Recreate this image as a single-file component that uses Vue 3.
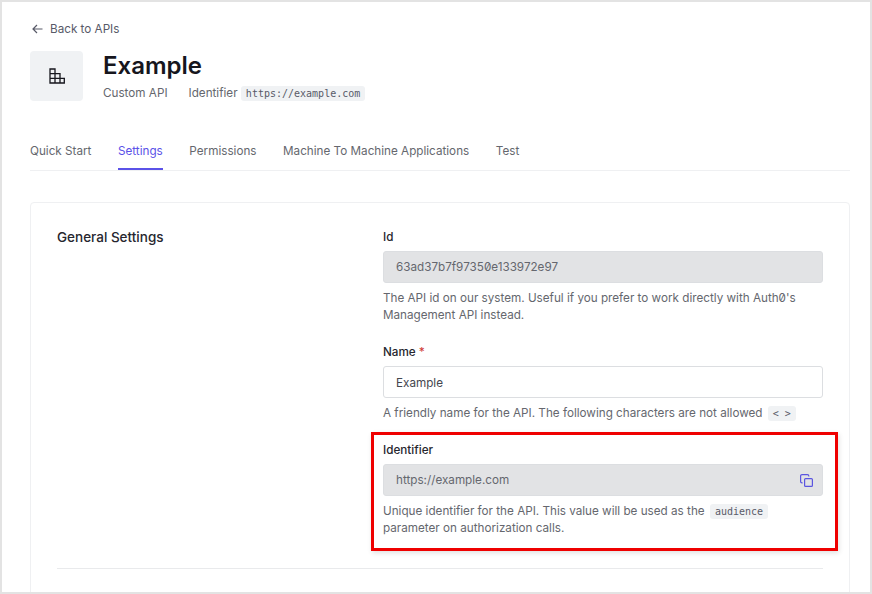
<template>
  <div class="page">
    <a class="back">
      <svg width="11" height="10" viewBox="0 0 11 10" fill="none" stroke="#585a68" stroke-width="1.2">
        <path d="M10.5 5H1M5 1L1 5l4 4" />
      </svg>
      <span>Back to APIs</span>
    </a>

    <header class="head">
      <div class="logo">
        <svg width="16" height="16" viewBox="0 0 16 16" fill="none" stroke="#16161d" stroke-width="1.3">
          <path d="M1 1h5v14H1zM1 5.6h10M1 10.3h15M6 5.6h5V15M6 10.3h9.3V15H6M11 10.3V15" />
        </svg>
      </div>
      <div>
        <h1>Example</h1>
        <div class="sub">
          <span>Custom API</span>
          <span class="ident">Identifier <code>https://example.com</code></span>
        </div>
      </div>
    </header>

    <nav class="tabs">
      <a v-for="tab in tabs" :key="tab" :class="{ active: tab === 'Settings' }">{{ tab }}</a>
    </nav>

    <section class="card">
      <div class="row">
        <h2>General Settings</h2>
        <div class="fields">
          <div class="field">
            <label>Id</label>
            <div class="input disabled">63ad37b7f97350e133972e97</div>
            <p>The API id on our system. Useful if you prefer to work directly with Auth0's Management API instead.</p>
          </div>
          <div class="field">
            <label>Name <i>*</i></label>
            <div class="input name">Example</div>
            <p>A friendly name for the API. The following characters are not allowed <code>&lt; &gt;</code></p>
          </div>
          <div class="field">
            <label>Identifier</label>
            <div class="input disabled">
              https://example.com
              <svg width="13" height="13" viewBox="0 0 13 13" fill="none" stroke="#5b55e0" stroke-width="1.2">
                <rect x="4.6" y="4.6" width="7.8" height="7.8" rx="1" />
                <path d="M2.6 8.8H2A1.4 1.4 0 0 1 .6 7.4V2A1.4 1.4 0 0 1 2 .6h5.4A1.4 1.4 0 0 1 8.8 2v.6" />
              </svg>
            </div>
            <p>Unique identifier for the API. This value will be used as the <code>audience</code> parameter on authorization calls.</p>
          </div>
        </div>
      </div>
      <hr />
    </section>

    <div class="highlight"></div>
  </div>
</template>

<script setup>
const tabs = ["Quick Start", "Settings", "Permissions", "Machine To Machine Applications", "Test"];
</script>

<style>
html,
body {
  margin: 0;
  background: #fff;
}
</style>

<style scoped>
.page {
  position: relative;
  box-sizing: border-box;
  width: 872px;
  height: 594px;
  overflow: hidden;
  border: 2px solid #e3e3e3;
  padding: 19px 20px 0 28px;
  font-family: Inter, "Liberation Sans", sans-serif;
  font-feature-settings: "zero";
  font-size: 11.7px;
  color: #65676e;
  background: #fff;
}

.back {
  display: flex;
  align-items: center;
  gap: 7px;
  height: 16px;
  padding-left: 2px;
  color: #585a68;
}

.head {
  display: flex;
  gap: 20px;
  margin-top: 14px;
}

.logo {
  display: flex;
  align-items: center;
  justify-content: center;
  width: 53px;
  height: 50px;
  border-radius: 4px;
  background: #f0f2f4;
}

h1 {
  margin: 0;
  font-size: 24px;
  line-height: 29px;
  font-weight: 600;
  color: #16161d;
}

.sub {
  display: flex;
  align-items: center;
  gap: 21px;
  height: 16px;
  margin-top: 5px;
}

code {
  padding: 2px 5px;
  border-radius: 3px;
  background: #f0f2f4;
  font-family: "DejaVu Sans Mono", "Liberation Mono", monospace;
  font-size: 10px;
  color: #585a68;
}

.tabs {
  display: flex;
  gap: 26.6px;
  height: 38px;
  margin-top: 31px;
  border-bottom: 1px solid #eff0f2;
}

.tabs a {
  box-sizing: border-box;
  height: 38px;
  padding-top: 12px;
  color: #65676e;
}

.tabs .active {
  color: #5b52e8;
  border-bottom: 2px solid #5b52e8;
}

.card {
  height: 420px;
  margin-top: 31px;
  padding: 27px 26px 0;
  border: 1px solid #eff0f2;
  border-radius: 4px;
}

.row {
  display: flex;
}

h2 {
  width: 326px;
  margin: 0;
  font-size: 13.5px;
  line-height: 15px;
  font-weight: 500;
  color: #26262e;
}

.fields {
  width: 440px;
}

.field {
  margin-bottom: 21px;
}

.field:last-child {
  margin-bottom: 31px;
}

label {
  display: block;
  margin-bottom: 7px;
  line-height: 14px;
  font-weight: 500;
  color: #26262e;
}

label i {
  font-style: normal;
  color: #d03c38;
}

.input {
  display: flex;
  align-items: center;
  justify-content: space-between;
  box-sizing: border-box;
  height: 32px;
  padding: 0 9px 0 12px;
  border: 1px solid #dcdee1;
  border-radius: 3px;
  color: #44464e;
}

.name {
  padding-top: 1px;
}

.disabled {
  background: #e2e3e5;
  color: #65676e;
}

p {
  margin: 7px 0 0;
  line-height: 17px;
}

p code {
  margin-left: 2px;
}

hr {
  margin: 0;
  border: 0;
  border-top: 1px solid #e9eaec;
}

.highlight {
  position: absolute;
  left: 369px;
  top: 430px;
  width: 467px;
  height: 119px;
  box-sizing: border-box;
  border: 3px solid #ef0000;
  box-shadow: 1px 2px 5px rgba(0, 0, 0, 0.12);
}
</style>
